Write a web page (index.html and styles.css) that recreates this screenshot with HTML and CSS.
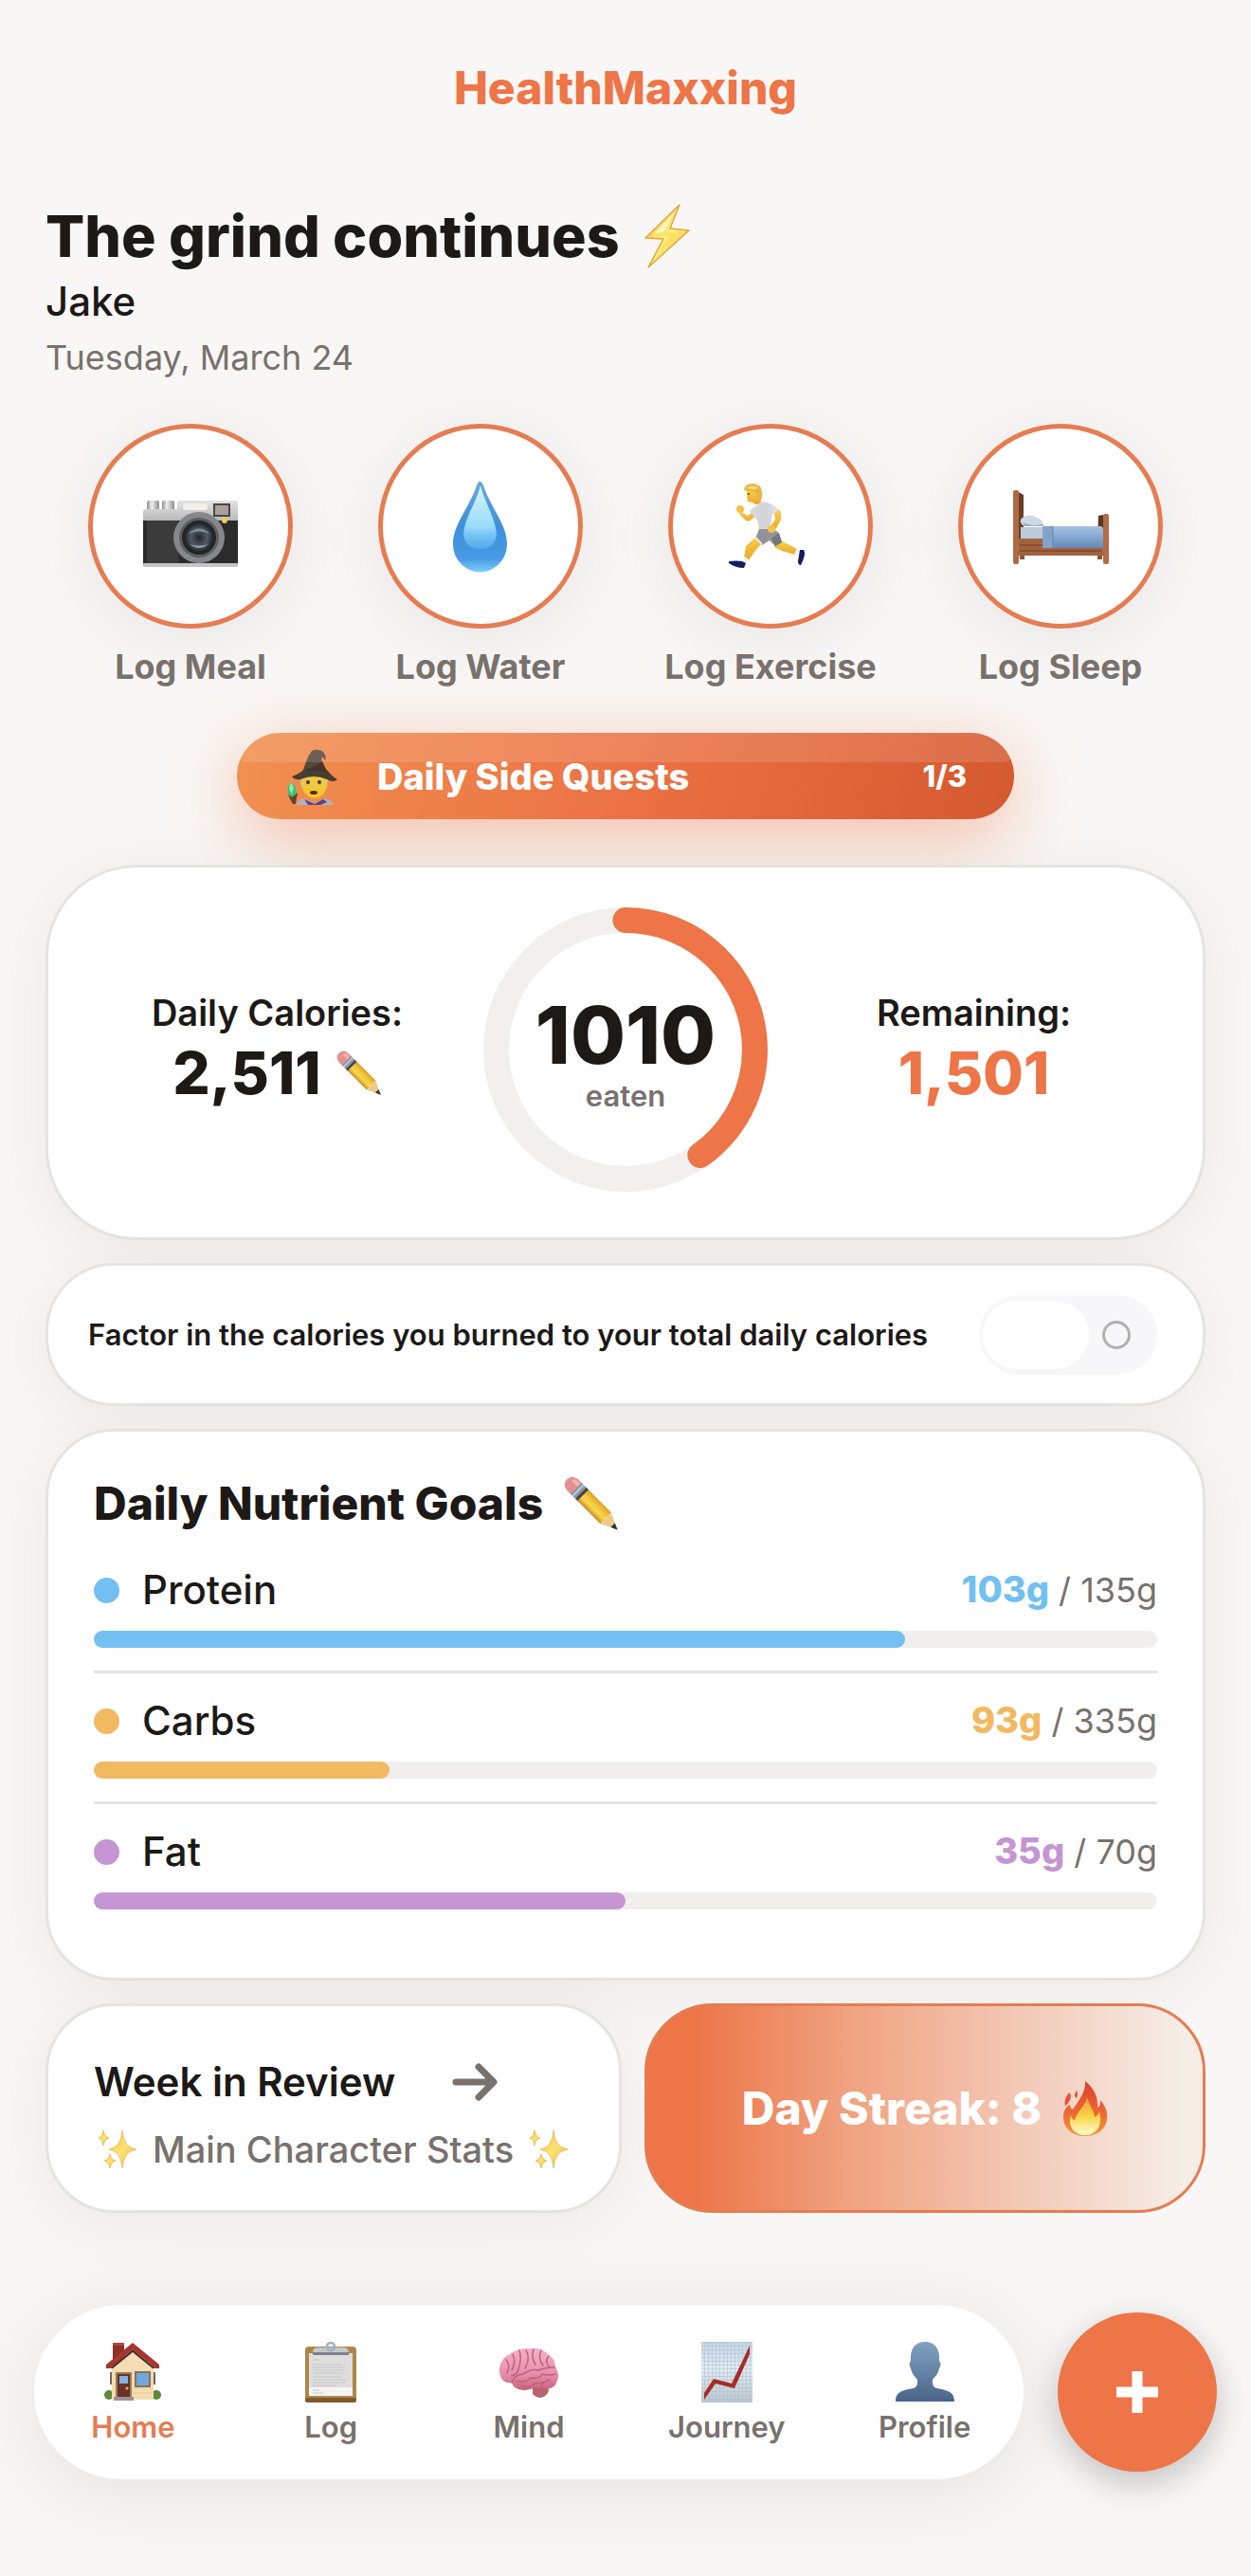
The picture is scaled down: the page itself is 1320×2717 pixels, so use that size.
FILE: index.html
```html
<!DOCTYPE html>
<html lang="en">
<head>
    <meta charset="UTF-8">
    <meta name="viewport" content="width=device-width, initial-scale=1.0">
    <title>HealthMaxxing</title>
    <link rel="stylesheet" href="styles.css">
</head>
<body>
    <!-- shared icons -->
    <svg class="defs" width="0" height="0" aria-hidden="true">
        <defs>
            <linearGradient id="pencilBody" x1="0" y1="0" x2="0" y2="1">
                <stop offset="0" stop-color="#d9a02c"/>
                <stop offset="0.35" stop-color="#f3c637"/>
                <stop offset="0.65" stop-color="#f7d653"/>
                <stop offset="1" stop-color="#c48d22"/>
            </linearGradient>
            <linearGradient id="sparkFill" x1="0" y1="0" x2="1" y2="1">
                <stop offset="0" stop-color="#f6bd4a"/>
                <stop offset="0.5" stop-color="#fbe373"/>
                <stop offset="1" stop-color="#f0b043"/>
            </linearGradient>
        </defs>
        <symbol id="pencil" viewBox="0 0 56 56">
            <g transform="translate(6 6) rotate(45)">
                <path d="M4-8H10V8H4Q-4 7-4 0Q-4-7 4-8Z" fill="#e58f8f"/>
                <path d="M1-5Q4-7 9-6V-2H0Z" fill="#f3b4b0"/>
                <rect x="9" y="-8" width="9" height="16" fill="#8796a6"/>
                <rect x="11" y="-8" width="2" height="16" fill="#c3ccd6"/>
                <rect x="16" y="-8" width="4" height="16" fill="#4b4640"/>
                <rect x="19" y="-8" width="33" height="16" fill="url(#pencilBody)"/>
                <path d="M52-8L68 0L52 8Q54 5 51 3Q54 0 51-3Q54-5 52-8Z" fill="#eac98d"/>
                <path d="M62-3L69 0L62 3Z" fill="#33302c"/>
            </g>
        </symbol>
        <symbol id="sparkles" viewBox="0 0 42 42">
            <g fill="url(#sparkFill)" stroke="#eeb33e" stroke-width="0.8">
                <path d="M26 1Q27 19 41 21Q27 23 26 41Q25 23 12 21Q25 19 26 1Z"/>
                <path d="M6 1Q7 8 12 9Q7 10 6 17Q5 10 1 9Q5 8 6 1Z"/>
                <path d="M13 26Q14 32 19 33Q14 34 13 41Q12 34 7 33Q12 32 13 26Z"/>
            </g>
        </symbol>
    </svg>

    <header class="topbar">
        <div class="brand">HealthMaxxing</div>
    </header>

    <main class="content">
        <section class="greeting">
            <h1>The grind continues
                <svg class="bolt" viewBox="0 0 48 68" aria-hidden="true">
                    <defs>
                        <linearGradient id="boltFill" x1="0" y1="0" x2="1" y2="1">
                            <stop offset="0" stop-color="#f3ad3c"/>
                            <stop offset="0.5" stop-color="#fdf086"/>
                            <stop offset="1" stop-color="#f0a436"/>
                        </linearGradient>
                    </defs>
                    <path d="M37 1L1 36L20 37L4 67L47 28L27 26Z" fill="url(#boltFill)" stroke="#e5a53c" stroke-width="1.5" stroke-linejoin="round"/>
                    <path d="M31 10L8 33L26 34L14 54L39 31L20 30Z" fill="#fae35f"/>
                    <path d="M31 10L11 31L20 30Z" fill="#fff6c4"/>
                </svg>
            </h1>
            <p class="name">Jake</p>
            <p class="date">Tuesday, March 24</p>
        </section>

        <section class="actions">
            <button class="action" type="button">
                <span class="action-circle">
                    <svg width="102" height="102" viewBox="0 -4 102 102" aria-hidden="true">
                        <defs>
                            <linearGradient id="camTop" x1="0" y1="0" x2="0" y2="1">
                                <stop offset="0" stop-color="#e3e3e3"/>
                                <stop offset="1" stop-color="#b4b4b4"/>
                            </linearGradient>
                            <linearGradient id="camKnob">
                                <stop offset="0" stop-color="#8c8c8c"/>
                                <stop offset="0.4" stop-color="#f0f0f0"/>
                                <stop offset="1" stop-color="#8a8a8a"/>
                            </linearGradient>
                            <radialGradient id="camLens">
                                <stop offset="0" stop-color="#20242a"/>
                                <stop offset="0.6" stop-color="#515a63"/>
                                <stop offset="1" stop-color="#23262a"/>
                            </radialGradient>
                        </defs>
                        <rect x="5" y="20" width="13" height="10" rx="2" fill="url(#camKnob)"/>
                        <rect x="21" y="20" width="13" height="10" rx="2" fill="url(#camKnob)"/>
                        <path d="M1 32Q1 29 4 29H37V22Q37 20 39 20H99Q101 20 101 23V44H1Z" fill="url(#camTop)"/>
                        <rect x="1" y="41" width="100" height="46" fill="#2b2b2b"/>
                        <rect x="5" y="41" width="33" height="45" fill="#3b3b3b"/>
                        <rect x="1" y="86" width="100" height="4" rx="1" fill="#c4c4c4"/>
                        <rect x="43" y="23" width="26" height="7" rx="3" fill="#f1efe6"/>
                        <rect x="76" y="24" width="16" height="12" fill="#a89f99" stroke="#494746" stroke-width="2"/>
                        <circle cx="60" cy="59" r="27" fill="#85878a"/>
                        <circle cx="60" cy="59" r="21" fill="#5c5e61"/>
                        <circle cx="60" cy="59" r="18" fill="#222427"/>
                        <circle cx="60" cy="59" r="15" fill="url(#camLens)"/>
                        <path d="M48 55Q60 44 72 55Q60 50 48 55Z" fill="#7d8993"/>
                        <path d="M50 66Q60 74 70 66Q60 69 50 66Z" fill="#8f99a1"/>
                        <circle cx="87" cy="41" r="3" fill="#f1cf3c"/>
                    </svg>
                </span>
                <span class="action-label">Log Meal</span>
            </button>
            <button class="action" type="button">
                <span class="action-circle">
                    <svg width="102" height="102" viewBox="0 -4 102 102" aria-hidden="true">
                        <defs>
                            <linearGradient id="dropOuter" x1="0" y1="0" x2="0" y2="1">
                                <stop offset="0" stop-color="#6aa9d8"/>
                                <stop offset="0.5" stop-color="#3e8fdb"/>
                                <stop offset="0.85" stop-color="#479ae6"/>
                                <stop offset="1" stop-color="#7cd0f8"/>
                            </linearGradient>
                            <linearGradient id="dropInner" x1="0" y1="0" x2="0" y2="1">
                                <stop offset="0" stop-color="#d5f3fd"/>
                                <stop offset="0.65" stop-color="#9adcfb"/>
                                <stop offset="1" stop-color="#6fc4f6" stop-opacity="0.4"/>
                            </linearGradient>
                        </defs>
                        <path d="M50 0Q53 0 54 4C62 28 79 45 79 66A28 29 0 0 1 22 66C22 45 39 28 47 4Q48 0 50 0Z" fill="url(#dropOuter)"/>
                        <path d="M51 4C56 24 67 38 68 56Q66 71 51 71Q35 71 33 56C34 38 46 24 51 4Z" fill="url(#dropInner)"/>
                    </svg>
                </span>
                <span class="action-label">Log Water</span>
            </button>
            <button class="action" type="button">
                <span class="action-circle">
                    <svg width="102" height="102" viewBox="0 -4 102 102" aria-hidden="true">
                        <defs>
                            <linearGradient id="shirt">
                                <stop offset="0" stop-color="#d9d9dd"/>
                                <stop offset="0.6" stop-color="#d3d3d8"/>
                                <stop offset="1" stop-color="#e4e4e8"/>
                            </linearGradient>
                            <linearGradient id="skin" x1="0" y1="0" x2="0" y2="1">
                                <stop offset="0" stop-color="#f8d04a"/>
                                <stop offset="1" stop-color="#e9a92c"/>
                            </linearGradient>
                        </defs>
                        <path d="M20 32L27 36L33 31L36 36L28 42Q24 41 18 34Z" fill="url(#skin)"/>
                        <circle cx="19" cy="29" r="4" fill="#f3c345"/>
                        <path d="M37 57L44 63L34 74L28 83L23 81L25 68Z" fill="url(#skin)"/>
                        <path d="M57 64L64 63L79 71L77 77L63 73L55 69Z" fill="url(#skin)"/>
                        <path d="M24 79L28 82L25 87L21 84Z" fill="#f1f1f3"/>
                        <path d="M79 70L82 73L79 79L76 76Z" fill="#f1f1f3"/>
                        <path d="M7 84Q15 83 21 84L25 86L23 91Q14 91 7 86Z" fill="#151c5e"/>
                        <path d="M82 72L86 72Q89 76 83 88Q80 88 80 84Z" fill="#151c5e"/>
                        <path d="M30 30Q37 24 43 21Q52 22 59 29L56 35L53 34L51 51Q45 53 39 50Q38 40 34 37L29 32Z" fill="url(#shirt)"/>
                        <path d="M55 34L60 29Q64 35 61 42L56 51L51 47L56 40Z" fill="url(#skin)"/>
                        <path d="M39 50L52 50L59 53L63 64L56 68L50 62L42 67L35 60Z" fill="#929298"/>
                        <path d="M52 60L60 54L63 64L56 68Z" fill="#75757b"/>
                        <path d="M35 59L42 66" stroke="#ededf0" stroke-width="2"/>
                        <circle cx="52" cy="50" r="4" fill="#f3c345"/>
                        <path d="M26 8H41V22Q36 26 32 22L27 21L26 15Z" fill="url(#skin)"/>
                        <path d="M23 9Q23 2 33 2Q42 3 42 11Q43 18 40 19L36 17Q36 12 34 10Q28 11 23 9Z" fill="#e9b844"/>
                        <path d="M25 7Q31 3 38 6L35 8Q30 8 25 7Z" fill="#f8dc82"/>
                        <circle cx="28" cy="13" r="1" fill="#6a4a1d"/>
                    </svg>
                </span>
                <span class="action-label">Log Exercise</span>
            </button>
            <button class="action" type="button">
                <span class="action-circle">
                    <svg width="102" height="102" viewBox="0 -4 102 102" aria-hidden="true">
                        <defs>
                            <linearGradient id="blanket" x1="0" y1="0" x2="0" y2="1">
                                <stop offset="0" stop-color="#a9c3df"/>
                                <stop offset="0.4" stop-color="#8caed6"/>
                                <stop offset="1" stop-color="#6488b8"/>
                            </linearGradient>
                        </defs>
                        <path d="M5 10L12 14V62H5Z" fill="#6b3f2a"/>
                        <path d="M91 36L96 35V62H90Z" fill="#5d3524"/>
                        <rect x="7" y="60" width="90" height="18" fill="#a1633f"/>
                        <path d="M8 67H94M8 73H94" stroke="#7c4a2e" stroke-width="1.5"/>
                        <rect x="8" y="78" width="5" height="4" fill="#8a5436"/>
                        <rect x="90" y="78" width="5" height="4" fill="#8a5436"/>
                        <rect x="9" y="48" width="26" height="12" fill="#bccada"/>
                        <path d="M32 47H93Q96 47 96 51V70H32Z" fill="url(#blanket)"/>
                        <path d="M32 47H43V70H32Z" fill="#83a3cb"/>
                        <path d="M43 47V70" stroke="#6786b0" stroke-width="1"/>
                        <path d="M9 40Q15 33 24 37Q34 40 33 47H13Q8 45 9 40Z" fill="#cfd9e6"/>
                        <path d="M11 43Q20 48 32 45L33 47H13Z" fill="#9dacbf"/>
                        <rect x="1" y="9" width="6" height="78" rx="2" fill="#ad6a45"/>
                        <rect x="96" y="34" width="6" height="53" rx="2" fill="#b06d47"/>
                    </svg>
                </span>
                <span class="action-label">Log Sleep</span>
            </button>
        </section>

        <button class="quests" type="button">
            <svg width="54" height="60" viewBox="0 0 54 60" aria-hidden="true">
                <path d="M8 60Q9 55 17 53L28 58L39 53Q47 55 48 60Z" fill="#b4b0bb"/>
                <path d="M17 54L28 59L37 54L41 57L34 60H21Z" fill="#564284"/>
                <path d="M12 30H43L41 42H14Z" fill="#b3bab8"/>
                <path d="M14 29H41V40Q39 52 28 53Q17 52 14 40Z" fill="#f2c62e"/>
                <g fill="none" stroke="#d9cf9e" stroke-width="1">
                    <circle cx="21" cy="37" r="5"/>
                    <circle cx="33" cy="37" r="5"/>
                </g>
                <circle cx="21" cy="36" r="2" fill="#49341c"/>
                <circle cx="33" cy="36" r="2" fill="#49341c"/>
                <ellipse cx="27" cy="47" rx="4" ry="2" fill="#5b2e18"/>
                <path d="M15 27Q19 11 25 3Q31 0 37 4Q41 9 39 13L36 9L35 12L42 27Z" fill="#57493b"/>
                <path d="M18 22Q28 21 36 14L42 27L16 28Z" fill="#42362a"/>
                <path d="M4 30Q12 27 16 23Q28 27 41 23Q46 30 52 33Q48 37 41 33Q27 27 13 33Q7 34 4 30Z" fill="#4a3d31"/>
                <path d="M0 49L4 51L10 47L8 59H5Q2 54 0 49Z" fill="#5f432e"/>
                <path d="M3 36L8 41V49L4 52L0 48V41Z" fill="#35c476"/>
                <path d="M3 36L6 42L4 49L1 43Z" fill="#8eeeac"/>
            </svg>
            <span class="quests-title">Daily Side Quests</span>
            <span class="quests-count">1/3</span>
        </button>

        <section class="card calories">
            <div class="stat">
                <div class="stat-label">Daily Calories:</div>
                <div class="stat-value">2,511
                    <button class="edit" type="button" aria-label="Edit daily calories">
                        <svg width="48" height="48"><use href="#pencil"/></svg>
                    </button>
                </div>
            </div>
            <div class="ring">
                <svg viewBox="0 0 300 300" aria-hidden="true">
                    <circle class="ring-track" cx="150" cy="150" r="136.5"/>
                    <circle class="ring-fill" cx="150" cy="150" r="136.5" pathLength="100" stroke-dasharray="40.2 100" transform="rotate(-90 150 150)"/>
                </svg>
                <div class="ring-text">
                    <div class="ring-value">1010</div>
                    <div class="ring-label">eaten</div>
                </div>
            </div>
            <div class="stat">
                <div class="stat-label">Remaining:</div>
                <div class="stat-value orange">1,501</div>
            </div>
        </section>

        <section class="card factor">
            <label for="factorToggle">Factor in the calories you burned to your total daily calories</label>
            <input class="toggle" id="factorToggle" type="checkbox">
        </section>

        <section class="card nutrients">
            <h2>Daily Nutrient Goals
                <button class="edit" type="button" aria-label="Edit nutrient goals">
                    <svg width="58" height="58"><use href="#pencil"/></svg>
                </button>
            </h2>
            <div class="nutrient protein">
                <div class="nutrient-head">
                    <span class="dot"></span>
                    <span class="nutrient-name">Protein</span>
                    <span class="nutrient-amount"><b>103g</b> / 135g</span>
                </div>
                <div class="bar"><div class="bar-fill" style="width: 76.3%"></div></div>
            </div>
            <div class="nutrient carbs">
                <div class="nutrient-head">
                    <span class="dot"></span>
                    <span class="nutrient-name">Carbs</span>
                    <span class="nutrient-amount"><b>93g</b> / 335g</span>
                </div>
                <div class="bar"><div class="bar-fill" style="width: 27.8%"></div></div>
            </div>
            <div class="nutrient fat">
                <div class="nutrient-head">
                    <span class="dot"></span>
                    <span class="nutrient-name">Fat</span>
                    <span class="nutrient-amount"><b>35g</b> / 70g</span>
                </div>
                <div class="bar"><div class="bar-fill" style="width: 50%"></div></div>
            </div>
        </section>

        <section class="bottom-cards">
            <a class="card week" href="#review">
                <span class="week-title">Week in Review
                    <svg width="48" height="40" viewBox="0 0 48 40" aria-hidden="true">
                        <path d="M4 20H43M28 4L44 20L28 36" fill="none" stroke="#78716c" stroke-width="7" stroke-linecap="round" stroke-linejoin="round"/>
                    </svg>
                </span>
                <span class="week-sub">
                    <svg width="42" height="42" aria-hidden="true"><use href="#sparkles"/></svg>
                    Main Character Stats
                    <svg width="42" height="42" aria-hidden="true"><use href="#sparkles"/></svg>
                </span>
            </a>
            <button class="streak" type="button">Day Streak: 8
                <svg width="48" height="58" viewBox="0 0 48 58" aria-hidden="true">
                    <defs>
                        <linearGradient id="flameOuter" x1="0" y1="0" x2="0" y2="1">
                            <stop offset="0" stop-color="#d9402c"/>
                            <stop offset="0.6" stop-color="#ee6a35"/>
                            <stop offset="1" stop-color="#f39a3a"/>
                        </linearGradient>
                        <linearGradient id="flameInner" x1="0" y1="0" x2="0" y2="1">
                            <stop offset="0" stop-color="#f5953a"/>
                            <stop offset="0.5" stop-color="#fad546"/>
                            <stop offset="1" stop-color="#fffbd0"/>
                        </linearGradient>
                    </defs>
                    <path d="M24 0C34 8 38 18 37 28Q41 25 40 20C46 27 48 34 47 40C46 51 36 58 24 58C11 58 1 50 1 38C1 31 4 27 8 25Q8 29 11 30C16 22 25 12 24 0Z" fill="url(#flameOuter)"/>
                    <path d="M7 12Q10 14 8 20Q6 24 3 26Q1 20 7 12ZM15 10Q17 13 15 18Q11 15 15 10Z" fill="#e0553a"/>
                    <path d="M26 17C29 27 33 30 34 38Q38 36 39 32C43 45 37 57 24 57C12 57 5 47 9 36Q10 41 13 41C16 31 24 27 26 17Z" fill="url(#flameInner)"/>
                </svg>
            </button>
        </section>
    </main>

    <footer class="dock">
        <nav class="tabs">
            <a class="tab active" href="#home">
                <svg width="64" height="64" viewBox="0 0 64 64" aria-hidden="true">
                    <rect x="11" y="1" width="12" height="24" fill="#8d2f2a"/>
                    <rect x="11" y="1" width="12" height="3" fill="#b2463c"/>
                    <circle cx="7" cy="56" r="5" fill="#5d8a37"/>
                    <circle cx="57" cy="56" r="5" fill="#5d8a37"/>
                    <path d="M32 7L54 28V61H10V28Z" fill="#f2deb2"/>
                    <path d="M12 34H53M12 39H53M12 44H53M12 49H53M12 54H53" stroke="#e4cc98" stroke-width="1"/>
                    <path d="M32 1L60 24V28H56L32 8L8 28H4V24Z" fill="#a8352f"/>
                    <path d="M32 8L56 28L53 28L32 11L11 28L8 28Z" fill="#4e2a28"/>
                    <rect x="14" y="32" width="17" height="27" fill="#9c7c5b"/>
                    <rect x="16" y="34" width="13" height="25" fill="#6b3127"/>
                    <rect x="18" y="36" width="9" height="8" fill="#7fb3e0"/>
                    <circle cx="26" cy="49" r="1.5" fill="#e4b95c"/>
                    <rect x="34" y="31" width="17" height="17" fill="#8c7057"/>
                    <rect x="36" y="33" width="13" height="13" fill="#6fa8dd"/>
                    <rect x="8" y="32" width="2" height="13" fill="#77655a"/>
                    <rect x="54" y="32" width="2" height="13" fill="#77655a"/>
                    <rect x="12" y="58" width="21" height="4" fill="#9c9490"/>
                </svg>
                <span>Home</span>
            </a>
            <a class="tab" href="#log">
                <svg width="64" height="64" viewBox="0 0 64 64" aria-hidden="true">
                    <rect x="5" y="5" width="54" height="59" rx="4" fill="#ad8748"/>
                    <rect x="5" y="59" width="54" height="5" rx="2" fill="#80592e"/>
                    <rect x="9" y="12" width="46" height="45" fill="#dedede"/>
                    <path d="M9 48H55V57H9Z" fill="#f4f4f4"/>
                    <path d="M13 19H20M13 24H44M13 27H47M13 30H46M13 33H45M13 37H44M13 40H49M13 43H48M13 46H38M13 51H20M13 54H24" stroke="#c6c6c6" stroke-width="1.2"/>
                    <path d="M13 12Q13 6 18 6H46Q51 6 51 12V13H13Z" fill="#c3c7ca"/>
                    <path d="M13 11H51V14H13Z" fill="#7d8084"/>
                    <circle cx="32" cy="5" r="4" fill="none" stroke="#9db2cc" stroke-width="2.5"/>
                </svg>
                <span>Log</span>
            </a>
            <a class="tab" href="#mind">
                <svg width="64" height="64" viewBox="0 0 64 64" aria-hidden="true">
                    <defs>
                        <linearGradient id="brainFill" x1="0" y1="0" x2="0" y2="1">
                            <stop offset="0" stop-color="#f3b3c7"/>
                            <stop offset="0.6" stop-color="#e98fac"/>
                            <stop offset="1" stop-color="#c9627c"/>
                        </linearGradient>
                    </defs>
                    <path d="M36 45Q46 43 53 48Q54 57 44 59Q40 59 36 55Z" fill="#b9606a"/>
                    <path d="M5 41Q0 36 1 28Q3 16 12 13Q20 6 32 7Q46 5 53 14Q60 18 60 26Q65 34 62 41Q59 51 49 49Q42 48 38 48Q30 53 21 50Q15 48 14 43Q9 44 5 41Z" fill="url(#brainFill)"/>
                    <g fill="none" stroke="#bd5f80" stroke-width="1.5" stroke-linecap="round">
                        <path d="M8 19Q13 25 9 33M15 13Q19 21 14 30M22 9Q25 17 21 29Q20 34 14 36M29 9Q34 17 28 28M37 8Q34 16 39 24M45 9Q41 17 47 25M53 15Q48 21 54 27"/>
                        <path d="M14 43Q16 35 26 34Q35 28 42 30Q49 27 59 27M18 41Q28 44 34 38Q43 40 46 34Q53 36 60 34M24 47Q33 49 38 44Q47 44 54 40M45 49Q45 43 50 42"/>
                    </g>
                </svg>
                <span>Mind</span>
            </a>
            <a class="tab" href="#journey">
                <svg width="64" height="64" viewBox="0 0 64 64" aria-hidden="true">
                    <defs>
                        <linearGradient id="chartPaper" x1="0" y1="0" x2="0" y2="1">
                            <stop offset="0" stop-color="#c5d5e3"/>
                            <stop offset="0.45" stop-color="#e3ecf4"/>
                            <stop offset="1" stop-color="#bcc5cd"/>
                        </linearGradient>
                        <pattern id="chartGrid" width="4" height="4" patternUnits="userSpaceOnUse">
                            <path d="M0 0H4M0 0V4" stroke="#a9bdce" stroke-width="1"/>
                        </pattern>
                    </defs>
                    <rect x="5" y="0" width="54" height="64" fill="url(#chartPaper)"/>
                    <rect x="5" y="0" width="54" height="64" fill="url(#chartGrid)"/>
                    <path d="M8 54L18 39L37 44L56 4V13L40 49L20 44L8 61Z" fill="#a62b27"/>
                </svg>
                <span>Journey</span>
            </a>
            <a class="tab" href="#profile">
                <svg width="64" height="64" viewBox="0 0 64 64" aria-hidden="true">
                    <defs>
                        <linearGradient id="personFill" x1="0" y1="0" x2="0" y2="1">
                            <stop offset="0" stop-color="#80a3c2"/>
                            <stop offset="1" stop-color="#4a6488"/>
                        </linearGradient>
                    </defs>
                    <path d="M32 0C43 0 48 8 47 20Q50 23 47 28C46 34 42 37 40 40Q39 47 44 49C55 51 63 52 63 63H1C1 52 9 51 20 49Q25 47 24 40C22 37 18 34 17 28Q14 23 17 20C16 8 21 0 32 0Z" fill="url(#personFill)"/>
                </svg>
                <span>Profile</span>
            </a>
        </nav>
        <button class="fab" type="button" aria-label="Add entry">
            <svg width="46" height="46" viewBox="0 0 46 46" aria-hidden="true">
                <path d="M23 1V45M1 23H45" stroke="#fff" stroke-width="11"/>
            </svg>
        </button>
    </footer>
</body>
</html>
```
FILE: styles.css
```css
* {
    box-sizing: border-box;
}

body {
    margin: 0;
    background-color: #f9f7f5;
    color: #1c1917;
    font-family: Inter, "Liberation Sans", sans-serif;
}

h1, h2, p {
    margin: 0;
}

button {
    margin: 0;
    padding: 0;
    border: none;
    background: none;
    color: inherit;
    font-family: inherit;
    cursor: pointer;
}

a {
    color: inherit;
    text-decoration: none;
}

svg {
    display: block;
    flex: none;
}

.defs {
    position: absolute;
}

.topbar {
    padding: 63px 48px 0;
    text-align: center;
}

.brand {
    color: #ed7547;
    font-size: 48px;
    font-weight: 800;
    line-height: 60px;
}

.content {
    display: flex;
    flex-direction: column;
    gap: 24px;
    padding: 90px 48px 0;
}

/* greeting */
h1 {
    display: flex;
    align-items: center;
    gap: 26px;
    font-size: 61px;
    font-weight: 800;
    line-height: 72px;
}

.bolt {
    width: 48px;
    height: 68px;
}

.name {
    margin-top: 7px;
    font-size: 42px;
    font-weight: 500;
    line-height: 52px;
}

.date {
    margin-top: 11px;
    color: #78716c;
    font-size: 36px;
    line-height: 44px;
}

/* quick log buttons */
.actions {
    display: grid;
    grid-template-columns: repeat(4, 1fr);
    margin-top: 24px;
}

.action {
    display: flex;
    flex-direction: column;
    align-items: center;
    gap: 18px;
}

.action-circle {
    display: flex;
    align-items: center;
    justify-content: center;
    width: 216px;
    height: 216px;
    border: 5px solid #e67c52;
    border-radius: 50%;
    background-color: #fff;
    box-shadow: 0 12px 72px rgba(0, 0, 0, 0.07);
}

.action-label {
    color: #78716c;
    font-size: 36px;
    font-weight: 700;
    line-height: 44px;
}

/* side quests */
.quests {
    position: relative;
    display: flex;
    align-items: center;
    align-self: center;
    width: 67%;
    height: 91px;
    margin: 24px 0;
    padding: 0 50px 0 54px;
    border-radius: 46px;
    background: linear-gradient(100deg, #f0904f, #ec7245 50%, #d4592e);
    box-shadow: 0 18px 72px rgba(237, 117, 71, 0.45);
    color: #fff;
}

.quests::before {
    content: "";
    position: absolute;
    top: 0;
    left: 3px;
    right: 3px;
    height: 31px;
    border-radius: 40px 40px 12px 12px;
    background-color: rgba(255, 255, 255, 0.13);
}

.quests-title {
    flex: 1;
    margin-left: 40px;
    font-size: 38px;
    font-weight: 800;
    line-height: 44px;
    text-align: left;
}

.quests-count {
    font-size: 31px;
    font-weight: 800;
}

/* cards, kept above the glow of the quests button */
.card {
    position: relative;
    border: 3px solid #e5e4e3;
    border-radius: 72px;
    background-color: #fff;
    box-shadow: 0 12px 72px rgba(0, 0, 0, 0.06);
}

.edit {
    display: block;
}

.calories {
    display: grid;
    grid-template-columns: 1fr 300px 1fr;
    align-items: center;
    padding: 42px 24px 48px;
    border-radius: 96px;
}

.stat {
    display: flex;
    flex-direction: column;
    align-items: center;
    gap: 6px;
}

.stat-label {
    font-size: 38px;
    font-weight: 600;
    line-height: 44px;
}

.stat-value {
    display: flex;
    align-items: center;
    gap: 16px;
    font-size: 62px;
    font-weight: 800;
    line-height: 72px;
}

.orange {
    color: #ed7547;
}

.ring {
    display: grid;
    place-items: center;
}

.ring > * {
    grid-area: 1 / 1;
}

.ring svg {
    width: 100%;
}

.ring-track,
.ring-fill {
    fill: none;
    stroke: #f1f0ee;
    stroke-width: 27;
}

.ring-fill {
    stroke: #ed7547;
    stroke-linecap: round;
}

.ring-text {
    padding-top: 6px;
    text-align: center;
}

.ring-value {
    font-size: 84px;
    font-weight: 800;
    line-height: 92px;
}

.ring-label {
    color: #78716c;
    font-size: 31px;
    font-weight: 600;
    line-height: 36px;
}

.factor {
    display: flex;
    align-items: center;
    justify-content: space-between;
    gap: 24px;
    min-height: 151px;
    padding: 30px 48px 30px 42px;
    font-size: 31px;
    font-weight: 600;
}

.toggle {
    appearance: none;
    display: flex;
    align-items: center;
    justify-content: space-between;
    flex: none;
    width: 188px;
    height: 84px;
    margin: 0;
    padding: 0 28px 0 4px;
    border-radius: 42px;
    background-color: #f7f7fa;
    cursor: pointer;
}

.toggle::before {
    content: "";
    width: 112px;
    height: 72px;
    border-radius: 36px;
    background-color: #fff;
}

.toggle::after {
    content: "";
    box-sizing: border-box;
    width: 30px;
    height: 30px;
    border: 3px solid #b0b0b0;
    border-radius: 50%;
}

.toggle:checked {
    flex-direction: row-reverse;
    background-color: #ed7547;
}

/* nutrients */
.nutrients {
    padding: 48px;
}

h2 {
    display: flex;
    align-items: center;
    gap: 22px;
    margin-bottom: 13px;
    font-size: 48px;
    font-weight: 800;
    line-height: 56px;
}

h2 .edit {
    margin: -2px 0;
}

.nutrient {
    padding: 24px 0;
}

.nutrient + .nutrient {
    border-top: 3px solid #e5e4e3;
}

.nutrient-head {
    display: flex;
    align-items: center;
    gap: 24px;
    margin-bottom: 17px;
    line-height: 52px;
}

.dot {
    width: 27px;
    height: 27px;
    border-radius: 50%;
}

.nutrient-name {
    flex: 1;
    font-size: 42px;
    font-weight: 500;
}

.nutrient-amount {
    color: #78716c;
    font-size: 36px;
}

.nutrient-amount b {
    font-size: 38px;
    font-weight: 800;
    line-height: 44px;
}

.bar {
    height: 18px;
    border-radius: 9px;
    background-color: #f1efed;
}

.bar-fill {
    height: 100%;
    border-radius: 9px;
}

.protein .dot, .protein .bar-fill {
    background-color: #72c0f0;
}

.protein b {
    color: #72c0f0;
}

.carbs .dot, .carbs .bar-fill {
    background-color: #f2b961;
}

.carbs b {
    color: #f2b961;
}

.fat .dot, .fat .bar-fill {
    background-color: #c595d4;
}

.fat b {
    color: #c595d4;
}

/* week review and streak */
.bottom-cards {
    display: grid;
    grid-template-columns: 608fr 592fr;
    gap: 24px;
}

.week {
    display: flex;
    flex-direction: column;
    gap: 23px;
    padding: 54px 48px 42px;
}

.week-title {
    display: flex;
    align-items: center;
    gap: 60px;
    font-size: 42px;
    font-weight: 600;
    line-height: 52px;
}

.week-sub {
    display: flex;
    align-items: center;
    gap: 16px;
    padding-left: 4px;
    color: #78716c;
    font-size: 38px;
    font-weight: 500;
    line-height: 44px;
    white-space: nowrap;
}

.streak {
    position: relative;
    display: flex;
    align-items: center;
    justify-content: center;
    gap: 22px;
    border: 3px solid #e67c52;
    border-radius: 72px;
    background: linear-gradient(90deg, #ed7547 8%, #f0a382 37%, #f6ede7 96%);
    color: #fff;
    font-size: 48px;
    font-weight: 800;
}

/* bottom navigation */
.dock {
    display: flex;
    align-items: center;
    gap: 36px;
    padding: 97px 36px 102px;
}

.tabs {
    display: grid;
    grid-template-columns: repeat(5, 1fr);
    flex: 1;
    padding: 39px 0 37px;
    border-radius: 92px;
    background-color: #fff;
    box-shadow: 0 12px 84px rgba(0, 0, 0, 0.09);
}

.tab {
    display: flex;
    flex-direction: column;
    align-items: center;
    gap: 8px;
    color: #78716c;
    font-size: 31px;
    font-weight: 600;
    line-height: 36px;
}

.tab.active {
    color: #e67c52;
}

.fab {
    display: flex;
    align-items: center;
    justify-content: center;
    width: 168px;
    height: 168px;
    border-radius: 50%;
    background-color: #ed7547;
    box-shadow: 0 12px 36px rgba(0, 0, 0, 0.22);
}
```
